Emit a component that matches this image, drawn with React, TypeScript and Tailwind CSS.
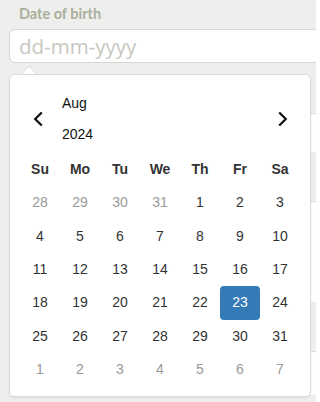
import React from "react";

const Chevron = ({ dir }: { dir: "left" | "right" }) => (
  <svg width="10" height="14" viewBox="0 0 10 14" fill="none">
    <path
      d={dir === "left" ? "M8 1.2 L2.2 7 L8 12.8" : "M2 1.2 L7.8 7 L2 12.8"}
      stroke="#111"
      strokeWidth="2.2"
      strokeLinecap="square"
      strokeLinejoin="miter"
    />
  </svg>
);

type Day = { n: number; out?: boolean; sel?: boolean };

const days: Day[] = [
  ...[28, 29, 30, 31].map((n) => ({ n, out: true })),
  ...Array.from({ length: 31 }, (_, i) => ({ n: i + 1, sel: i + 1 === 23 })),
  ...[1, 2, 3, 4, 5, 6, 7].map((n) => ({ n, out: true })),
];

const heads = ["Su", "Mo", "Tu", "We", "Th", "Fr", "Sa"];

export default function App() {
  return (
    <div className="relative w-[316px] h-[402px] overflow-hidden bg-[#eeeeec]">
      <div className="pl-[19px] pt-[4px] h-[20px] box-content text-[14.5px] leading-[20px] font-bold text-[#a9b09b] [font-family:Lato,'Open_Sans',sans-serif]">
        Date of birth
      </div>
      <div className="ml-[9px] mt-[5px] w-[330px] h-[34px] rounded-[6px] border border-[#d6d6d2] bg-white flex items-center pl-[9px]">
        <span className="text-[20.5px] leading-none text-[#c6c8c0] [font-family:'Open_Sans',sans-serif]">
          dd-mm-yyyy
        </span>
      </div>
      <div className="flex flex-col ml-[9px]">
        <div className="mt-[50px] h-[39px] bg-white border-t border-[#dcdcdc]" />
        <div className="mt-[49px] h-[101px] bg-white border-t border-[#dcdcdc]" />
        <div className="mt-[49px] h-[44px] bg-white border-t border-[#dcdcdc]" />
      </div>

      {/* caret */}
      <svg
        className="absolute left-[19px] top-[65px]"
        width="20"
        height="11"
        viewBox="0 0 20 11"
      >
        <polygon points="1,10.5 10,1 19,10.5" fill="white" stroke="#d8d8d8" strokeWidth="1" />
        <rect x="0" y="10" width="20" height="2" fill="white" />
      </svg>

      <div className="absolute left-[9px] top-[74px] w-[302px] h-[323px] bg-white border border-[#dadada] rounded-[5px] shadow-[0_1px_2px_rgba(0,0,0,0.08)] px-[10px] [font-family:'Liberation_Sans',Arial,sans-serif] text-[14px]">
        <div className="mt-[18px] h-[51px] flex items-center">
          <div className="w-[35px] flex justify-center">
            <Chevron dir="left" />
          </div>
          <div className="ml-[7px] flex flex-col gap-[11px] text-[#111]">
            <div className="leading-[20px]">Aug</div>
            <div className="leading-[20px]">2024</div>
          </div>
          <div className="ml-auto w-[34px] flex justify-center">
            <Chevron dir="right" />
          </div>
        </div>
        <div className="mt-[9px] grid grid-cols-7 auto-rows-[33.33px]">
          {heads.map((h) => (
            <div key={h} className="flex items-center justify-center font-bold text-[#333]">
              {h}
            </div>
          ))}
          {days.map((d, i) => (
            <div
              key={i}
              className={
                d.sel
                  ? "flex items-center justify-center rounded-[4px] bg-[#337ab7] text-white"
                  : d.out
                  ? "flex items-center justify-center text-[#999]"
                  : "flex items-center justify-center text-[#333]"
              }
            >
              {d.n}
            </div>
          ))}
        </div>
      </div>
    </div>
  );
}
